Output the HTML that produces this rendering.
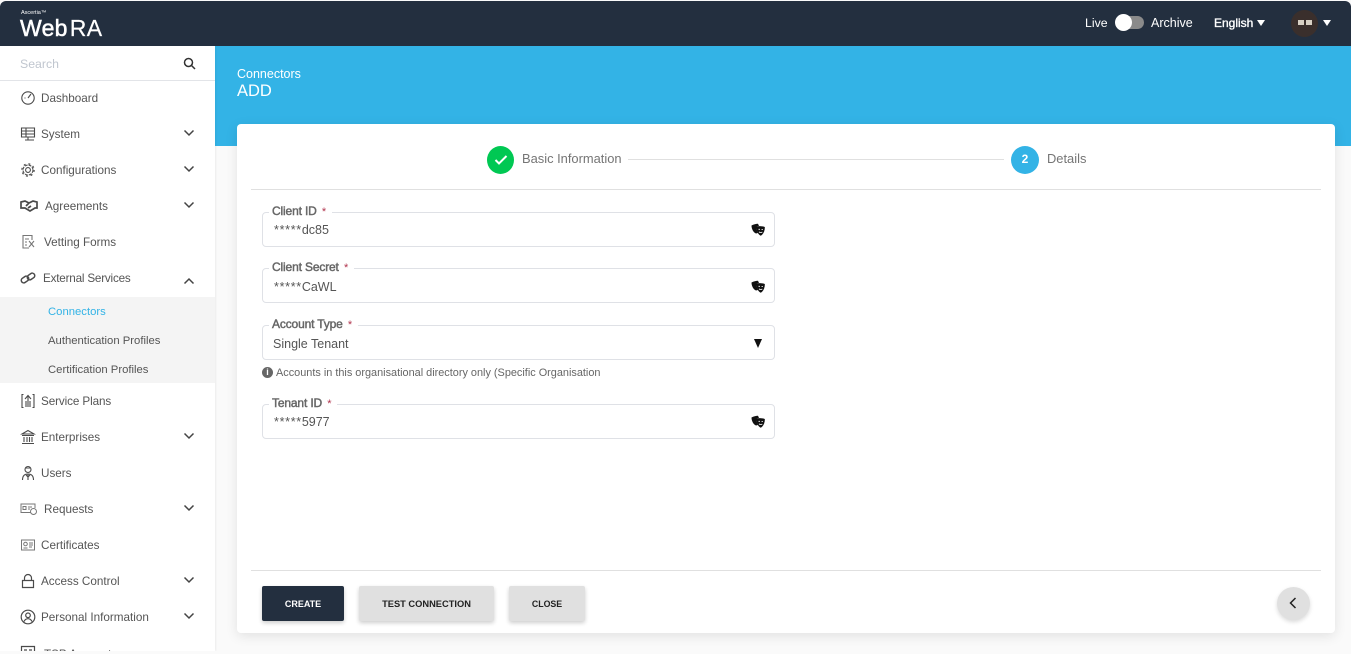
<!DOCTYPE html>
<html lang="en">
<head>
<meta charset="utf-8">
<title>WebRA - Connectors</title>
<style>
*{box-sizing:border-box}
html{margin:0;padding:0;width:1351px;height:654px;overflow:hidden;background:#fafafa}
body{margin:0;padding:0;position:relative;width:1351px;height:654px;overflow:hidden;background:#fafafa;font-family:"Liberation Sans",sans-serif;color:#555}
.abs,.t{position:absolute}
.t{white-space:nowrap;line-height:16px}
#hdr{left:0;top:1px;width:1351px;height:45px;background:#232f3f;border-radius:6px 6px 0 0}
#band{left:215px;top:46px;width:1136px;height:100px;background:#33b3e6}
#side{left:0;top:46px;width:215px;height:605px;background:#fff;box-shadow:1px 0 2px rgba(0,0,0,.06);overflow:hidden}
#card{left:237px;top:124px;width:1098px;height:509px;background:#fff;border-radius:4px;box-shadow:0 3px 12px rgba(0,0,0,.1)}
.m{position:absolute;left:41px;font-size:11.7px;color:#555;white-space:nowrap;line-height:18px}
.ic{position:absolute;left:20px;width:16px;height:16px;fill:none;stroke:#4a4a4a;stroke-width:1.1}
.ch{position:absolute;left:183px;width:12px;height:8px;fill:none;stroke:#444;stroke-width:1.5}
.sub{position:absolute;left:48px;font-size:11.3px;color:#555;white-space:nowrap;line-height:14px}
.fld{position:absolute;left:262px;width:513px;height:35px;border:1px solid #dfe1e6;border-radius:4px;background:#fff}
.lbl{position:absolute;left:269px;background:#fff;padding:0 6px 0 3px;font-size:12px;letter-spacing:-.15px;color:#666;-webkit-text-stroke:.45px #666;line-height:14px;white-space:nowrap}
.lbl i{font-style:normal;color:#b0334c;-webkit-text-stroke:0;margin-left:2px;font-size:11px}
.val{position:absolute;left:274px;font-size:12.5px;color:#555;line-height:16px;white-space:nowrap}
.val b{font-weight:normal;letter-spacing:.7px}
.mask{position:absolute;left:751px;width:14px;height:13px}
.btn{position:absolute;top:586px;height:35px;padding-top:1px;border-radius:2px;font-size:9.3px;font-weight:bold;display:flex;align-items:center;justify-content:center;box-shadow:0 2px 4px rgba(0,0,0,.2);background:#e0e0e0;color:#222}
</style>
</head>
<body>
<div id="band" class="abs"></div>
<div id="side" class="abs"></div>
<div id="hdr" class="abs"></div>

<!-- header -->
<div class="t" style="left:21px;top:9px;font-size:5.5px;line-height:8px;color:#fff">Ascertia™</div>
<div class="t" style="left:20px;top:15px;font-size:23px;line-height:26px;color:#fff;letter-spacing:.3px;-webkit-text-stroke:.5px #fff">Web<span style="margin-left:2px;-webkit-text-stroke:.2px #fff">RA</span></div>
<div class="t" style="left:1085px;top:15px;font-size:12.3px;color:#fff">Live</div>
<div class="abs" style="left:1116px;top:16px;width:28px;height:13px;border-radius:7px;background:#8a8a8a"></div>
<div class="abs" style="left:1115px;top:14px;width:17px;height:17px;border-radius:50%;background:#fff"></div>
<div class="t" style="left:1151px;top:15px;font-size:12.5px;color:#fff">Archive</div>
<div class="t" style="left:1214px;top:15px;font-size:12px;color:#fff;-webkit-text-stroke:.35px #fff">English</div>
<div class="abs" style="left:1257px;top:20px;width:0;height:0;border-left:4.5px solid transparent;border-right:4.5px solid transparent;border-top:6px solid #fff"></div>
<div class="abs" style="left:1291px;top:10px;width:27px;height:27px;border-radius:50%;background:#3a2f2c"></div>
<div class="abs" style="left:1298px;top:20px;width:6px;height:5px;background:#d8d0c4"></div>
<div class="abs" style="left:1306px;top:20px;width:6px;height:5px;background:#d8d0c4"></div>
<div class="abs" style="left:1323px;top:20px;width:0;height:0;border-left:4.5px solid transparent;border-right:4.5px solid transparent;border-top:6px solid #fff"></div>

<!-- search -->
<div class="t" style="left:20px;top:56px;font-size:12.3px;color:#c0c6cf">Search</div>
<svg class="abs" style="left:183px;top:57px;width:13px;height:13px;fill:none;stroke:#333;stroke-width:1.5" viewBox="0 0 13 13"><circle cx="5.5" cy="5.5" r="4"/><path d="M8.5 8.5L12 12"/></svg>
<div class="abs" style="left:0;top:80px;width:215px;height:1px;background:#e2e4e8"></div>

<!-- submenu background -->
<div class="abs" style="left:0;top:297px;width:215px;height:86px;background:#f4f4f4"></div>

<!-- menu -->
<svg class="ic" style="top:90px" viewBox="0 0 16 16"><circle cx="8" cy="8" r="6.2"/><path d="M8 8l3-4M4.5 8h1"/></svg>
<div class="m" style="top:90px">Dashboard</div>

<svg class="ic" style="top:126px" viewBox="0 0 16 16"><path d="M1.5 2h13v9h-13zM1.5 5h13M1.5 8h13M6 2v9M5 14h9M8 11v3"/></svg>
<div class="m" style="top:126px">System</div>
<svg class="ch" style="top:129px" viewBox="0 0 12 8"><path d="M1.5 1.5L6 6l4.5-4.5"/></svg>

<svg class="ic" style="top:162px" viewBox="0 0 16 16"><circle cx="8" cy="8" r="2.4"/><circle cx="8" cy="8" r="5" stroke-dasharray="3 1"/><circle cx="8" cy="8" r="6.2" stroke-dasharray="2 2.9"/></svg>
<div class="m" style="top:162px">Configurations</div>
<svg class="ch" style="top:165px" viewBox="0 0 12 8"><path d="M1.5 1.5L6 6l4.5-4.5"/></svg>

<svg class="ic" style="top:198px;width:18px;stroke-width:1.7" viewBox="0 0 18 16"><path d="M1 4l4-1 4 2 4-2 4 1v6h-2l-5 3-5-3H1zM6 8l3-3M8 10l3-2"/></svg>
<div class="m" style="top:198px;left:45px">Agreements</div>
<svg class="ch" style="top:201px" viewBox="0 0 12 8"><path d="M1.5 1.5L6 6l4.5-4.5"/></svg>

<svg class="ic" style="top:234px;left:21px;stroke:#777" viewBox="0 0 16 16"><path d="M11 6V1.5H2v12.500h6M4 5h4M4 8h2M4 11h2M8 7l5 6M13 7l-5 6"/></svg>
<div class="m" style="top:234px;left:44px">Vetting Forms</div>

<svg class="ic" style="top:270px;stroke-width:1.5" viewBox="0 0 16 16"><rect x="1" y="7" width="8" height="5" rx="2.5" transform="rotate(-35 5 9.5)"/><rect x="7" y="4" width="8" height="5" rx="2.5" transform="rotate(-35 11 6.5)"/></svg>
<div class="m" style="top:270px;left:43px;letter-spacing:-.2px">External Services</div>
<svg class="ch" style="top:277px" viewBox="0 0 12 8"><path d="M1.5 6.500L6 2l4.500 4.500"/></svg>

<div class="sub" style="top:305px;color:#33b3e6">Connectors</div>
<div class="sub" style="top:334px">Authentication Profiles</div>
<div class="sub" style="top:363px">Certification Profiles</div>

<svg class="ic" style="top:393px" viewBox="0 0 16 16"><path d="M3.500 1.500H2v13h1.500M12.500 1.500H14v13h-1.500M8 14V3M5 6l3-3.500L11 6M6 8v6M10 8v6"/></svg>
<div class="m" style="top:393px;letter-spacing:-.1px">Service Plans</div>

<svg class="ic" style="top:429px" viewBox="0 0 16 16"><path d="M8 1.500L2 5h12zM2 6.500h12M2 14.500h12M4 8v5M7 8v5M9.500 8v5M12 8v5"/></svg>
<div class="m" style="top:429px">Enterprises</div>
<svg class="ch" style="top:432px" viewBox="0 0 12 8"><path d="M1.500 1.500L6 6l4.500-4.500"/></svg>

<svg class="ic" style="top:465px" viewBox="0 0 16 16"><circle cx="8" cy="4.500" r="3"/><path d="M5 3h6M2.500 15c0-4 2-6 5.500-6s5.500 2 5.500 6M8 9v6M6 10l2 2 2-2"/></svg>
<div class="m" style="top:465px">Users</div>

<svg class="ic" style="top:501px;width:18px;stroke:#777;stroke-width:1" viewBox="0 0 18 16"><path d="M11 11.500H1V3h14v4M3 5.500h3v3H3zM8 6h4M8 8h2"/><circle cx="13.500" cy="10.500" r="3"/></svg>
<div class="m" style="top:501px;left:44px">Requests</div>
<svg class="ch" style="top:504px" viewBox="0 0 12 8"><path d="M1.500 1.500L6 6l4.500-4.500"/></svg>

<svg class="ic" style="top:537px;stroke:#777;stroke-width:1" viewBox="0 0 16 16"><path d="M1.500 3h13v10h-13zM9 6h4M9 8h4M9 10h3"/><circle cx="5.500" cy="7" r="1.800"/><path d="M3.500 11h4"/></svg>
<div class="m" style="top:537px">Certificates</div>

<svg class="ic" style="top:573px;stroke-width:1.2" viewBox="0 0 16 16"><path d="M2.500 7.500h11v7h-11zM4.500 7.500V5a3.500 3.500 0 0 1 7 0v2.500"/></svg>
<div class="m" style="top:573px">Access Control</div>
<svg class="ch" style="top:576px" viewBox="0 0 12 8"><path d="M1.500 1.500L6 6l4.500-4.500"/></svg>

<svg class="ic" style="top:609px;stroke-width:1.2" viewBox="0 0 16 16"><circle cx="8" cy="8" r="6.800"/><circle cx="8" cy="6.300" r="2.300"/><path d="M4 12.500c1-2 2.500-2.800 4-2.800s3 .8 4 2.800"/></svg>
<div class="m" style="top:609px">Personal Information</div>
<svg class="ch" style="top:612px" viewBox="0 0 12 8"><path d="M1.500 1.500L6 6l4.500-4.500"/></svg>

<svg class="ic" style="top:645px;stroke-width:1.2" viewBox="0 0 16 16"><path d="M1.500 1.500h13v10h-13zM4 5h3M9 5h3"/></svg>
<div class="m" style="top:646px;left:44px">TSP Accounts</div>
<div class="abs" style="left:0;top:651px;width:237px;height:3px;background:#fafafa"></div>

<!-- page heading -->
<div class="t" style="left:237px;top:66px;font-size:12.5px;color:#fff">Connectors</div>
<div class="t" style="left:237px;top:81px;font-size:16.5px;line-height:20px;color:#fff">ADD</div>

<div id="card" class="abs"></div>

<!-- stepper -->
<div class="abs" style="left:487px;top:146px;width:27px;height:28px;border-radius:50%;background:#00c853"></div>
<svg class="abs" style="left:494px;top:154px;width:14px;height:12px;fill:none;stroke:#fff;stroke-width:2" viewBox="0 0 14 12"><path d="M1.500 6l3.500 3.500L12.500 2"/></svg>
<div class="t" style="left:522px;top:151px;font-size:12.9px;color:#757575">Basic Information</div>
<div class="abs" style="left:628px;top:159px;width:376px;height:1px;background:#e0e0e0"></div>
<div class="abs" style="left:1011px;top:146px;width:28px;height:28px;border-radius:50%;background:#33b3e6;color:#fff;font-size:12px;font-weight:bold;text-align:center;line-height:26px">2</div>
<div class="t" style="left:1047px;top:151px;font-size:12.9px;color:#757575">Details</div>
<div class="abs" style="left:251px;top:189px;width:1070px;height:1px;background:#e0e0e0"></div>

<!-- fields -->
<div class="fld" style="top:212px"></div>
<div class="lbl" style="top:204px">Client ID <i>*</i></div>
<div class="val" style="top:222px"><b>*****</b>dc85</div>
<svg class="mask" style="top:223px" viewBox="0 0 14 13"><path d="M.5 2.500C2.500 1.500 5 .8 7 .8L8 3 5.500 3.500C5.500 6 6 8 7 10L5 10.500C2.500 9.500.5 6 .5 2.500z" fill="#111"/><path d="M5.500 3.500C8 2.800 11 3 13.800 4C14 7.500 12.500 11 9.800 12.800C7 11.500 5.200 7.500 5.500 3.500z" fill="#111"/><path d="M7.500 6.300h1.500M10.500 6.500h1.500M8 8.800c1 1 2.300 1 3.300.1" stroke="#fff" stroke-width=".8" fill="none"/></svg>

<div class="fld" style="top:268px"></div>
<div class="lbl" style="top:260px">Client Secret <i>*</i></div>
<div class="val" style="top:279px"><b>*****</b>CaWL</div>
<svg class="mask" style="top:280px" viewBox="0 0 14 13"><path d="M.5 2.500C2.500 1.500 5 .8 7 .8L8 3 5.500 3.500C5.500 6 6 8 7 10L5 10.500C2.500 9.500.5 6 .5 2.500z" fill="#111"/><path d="M5.500 3.500C8 2.800 11 3 13.800 4C14 7.500 12.500 11 9.800 12.800C7 11.500 5.200 7.500 5.500 3.500z" fill="#111"/><path d="M7.500 6.300h1.500M10.500 6.500h1.500M8 8.800c1 1 2.300 1 3.300.1" stroke="#fff" stroke-width=".8" fill="none"/></svg>

<div class="fld" style="top:325px"></div>
<div class="lbl" style="top:317px">Account Type <i>*</i></div>
<div class="val" style="top:336px;left:273px">Single Tenant</div>
<div class="abs" style="left:754px;top:339px;width:0;height:0;border-left:4.5px solid transparent;border-right:4.5px solid transparent;border-top:9px solid #111"></div>
<div class="abs" style="left:262px;top:367px;width:11px;height:11px;border-radius:50%;background:#666;color:#fff;font-size:9px;font-weight:bold;line-height:11px;text-align:center">i</div>
<div class="t" style="left:276px;top:365px;font-size:10.9px;color:#666">Accounts in this organisational directory only (Specific Organisation</div>

<div class="fld" style="top:404px"></div>
<div class="lbl" style="top:396px">Tenant ID <i>*</i></div>
<div class="val" style="top:414px"><b>*****</b>5977</div>
<svg class="mask" style="top:415px" viewBox="0 0 14 13"><path d="M.5 2.500C2.500 1.500 5 .8 7 .8L8 3 5.500 3.500C5.500 6 6 8 7 10L5 10.500C2.500 9.500.5 6 .5 2.500z" fill="#111"/><path d="M5.500 3.500C8 2.800 11 3 13.800 4C14 7.500 12.500 11 9.800 12.800C7 11.500 5.200 7.500 5.500 3.500z" fill="#111"/><path d="M7.500 6.300h1.500M10.500 6.500h1.500M8 8.800c1 1 2.300 1 3.300.1" stroke="#fff" stroke-width=".8" fill="none"/></svg>

<!-- footer -->
<div class="abs" style="left:251px;top:570px;width:1070px;height:1px;background:#e0e0e0"></div>
<div class="btn" style="left:262px;width:82px;background:#232f3f;color:#fff;font-size:9px">CREATE</div>
<div class="btn" style="left:359px;width:135px">TEST CONNECTION</div>
<div class="btn" style="left:509px;width:76px;font-size:8.8px">CLOSE</div>
<div class="abs" style="left:1277px;top:587px;width:33px;height:33px;border-radius:50%;background:#e0e0e0;box-shadow:0 2px 4px rgba(0,0,0,.15)"></div>
<svg class="abs" style="left:1289px;top:597px;width:8px;height:12px;fill:none;stroke:#222;stroke-width:1.500" viewBox="0 0 8 12"><path d="M6.500 1L1.500 6l5 5"/></svg>
</body>
</html>
